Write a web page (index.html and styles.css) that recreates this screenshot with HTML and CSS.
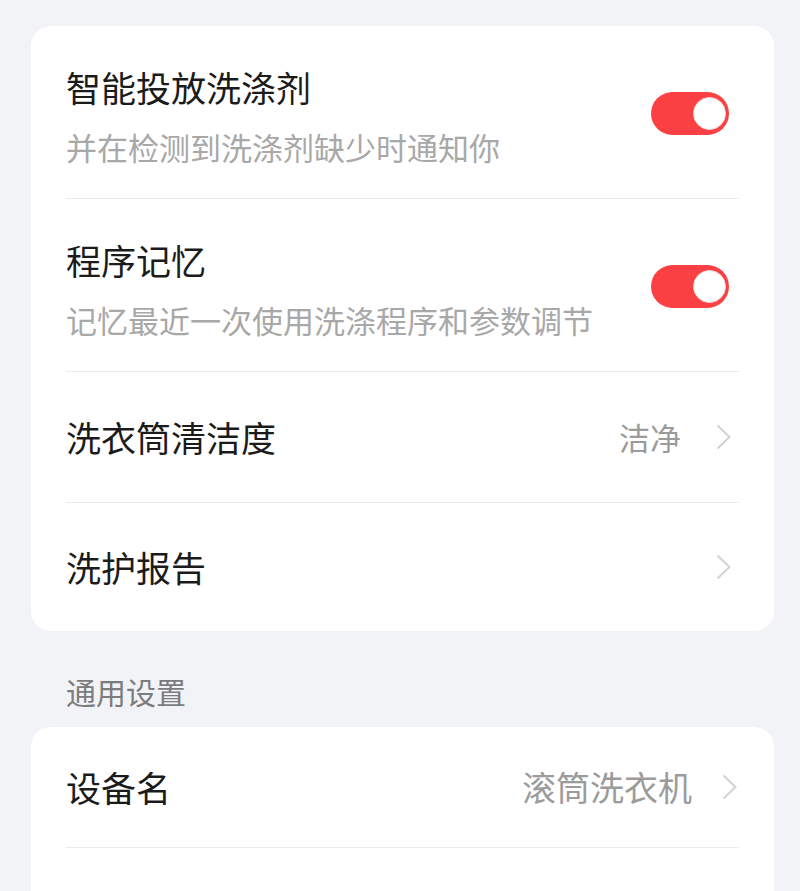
FILE: index.html
```html
<!DOCTYPE html>
<html lang="zh-CN">
<head>
    <meta charset="UTF-8">
    <meta name="viewport" content="width=device-width, initial-scale=1.0">
    <title>设备设置</title>
    <link rel="stylesheet" href="styles.css">
</head>
<body>

<div class="page">
    <div class="card">
        <div class="row row-tall">
            <div class="text">
                <div class="title">智能投放洗涤剂</div>
                <div class="desc">并在检测到洗涤剂缺少时通知你</div>
            </div>
            <div class="switch on"><span class="knob"></span></div>
        </div>

        <div class="row row-tall">
            <div class="text">
                <div class="title">程序记忆</div>
                <div class="desc">记忆最近一次使用洗涤程序和参数调节</div>
            </div>
            <div class="switch on"><span class="knob"></span></div>
        </div>

        <div class="row">
            <div class="title">洗衣筒清洁度</div>
            <div class="extra">
                <span class="value">洁净</span>
                <svg class="arrow" width="15" height="26" viewBox="0 0 15 26"><polyline points="1.5,1.5 13.5,13 1.5,24.5" fill="none" stroke="#d2d2d2" stroke-width="2"/></svg>
            </div>
        </div>

        <div class="row last">
            <div class="title">洗护报告</div>
            <div class="extra">
                <svg class="arrow" width="15" height="26" viewBox="0 0 15 26"><polyline points="1.5,1.5 13.5,13 1.5,24.5" fill="none" stroke="#d2d2d2" stroke-width="2"/></svg>
            </div>
        </div>
    </div>

    <div class="section-title">通用设置</div>

    <div class="card card-general">
        <div class="row row-short">
            <div class="title">设备名</div>
            <div class="extra">
                <span class="value">滚筒洗衣机</span>
                <svg class="arrow" width="15" height="26" viewBox="0 0 15 26"><polyline points="1.5,1.5 13.5,13 1.5,24.5" fill="none" stroke="#d2d2d2" stroke-width="2"/></svg>
            </div>
        </div>
    </div>
</div>

</body>
</html>
```

FILE: styles.css
```css
body {
    font-family: "Noto Sans CJK SC", "Noto Sans", sans-serif;
    background-color: #f2f3f7;
    margin: 0;
    padding: 0;
    overflow: hidden;
}
.page {
    padding-top: 26px;
}
.card {
    margin: 0 26px 0 31px;
    padding: 0 35px;
    background-color: #fff;
    border-radius: 20px;
}
.row {
    display: flex;
    align-items: center;
    justify-content: space-between;
    height: 131px;
    border-bottom: 1px solid #ebebeb;
    box-sizing: border-box;
}
.row.last {
    height: 128px;
    border-bottom: none;
}
.row-tall {
    height: 173px;
    padding: 39px 0 30px;
}
.row-short {
    height: 121px;
}
.title {
    font-size: 35px;
    line-height: 42px;
    color: #1b1b1b;
}
.desc {
    margin-top: 18px;
    font-size: 31px;
    line-height: 42px;
    color: #a8a8a8;
}
.extra {
    display: flex;
    align-items: center;
    margin-right: 8px;
}
.value {
    font-size: 31px;
    line-height: 42px;
    color: #9b9b9b;
    margin-right: 35px;
}
.arrow {
    display: block;
}
.switch {
    position: relative;
    width: 78px;
    height: 43px;
    margin: 0 10px 6px 0;
    border-radius: 22px;
    background-color: #ddd;
}
.switch.on {
    background-color: #fa4042;
}
.knob {
    position: absolute;
    top: 5px;
    right: 3px;
    width: 31px;
    height: 31px;
    border-radius: 50%;
    background-color: #fff;
    border: 1px solid #e6d9d9;
}
.section-title {
    padding-left: 66px;
    margin-top: 40px;
    font-size: 30px;
    line-height: 40px;
    color: #7c7c7c;
}
.card-general {
    margin-top: 16px;
    padding-bottom: 80px;
}
.card-general .extra {
    margin-right: 2px;
}
.card-general .value {
    font-size: 34px;
    margin-right: 30px;
}
```
